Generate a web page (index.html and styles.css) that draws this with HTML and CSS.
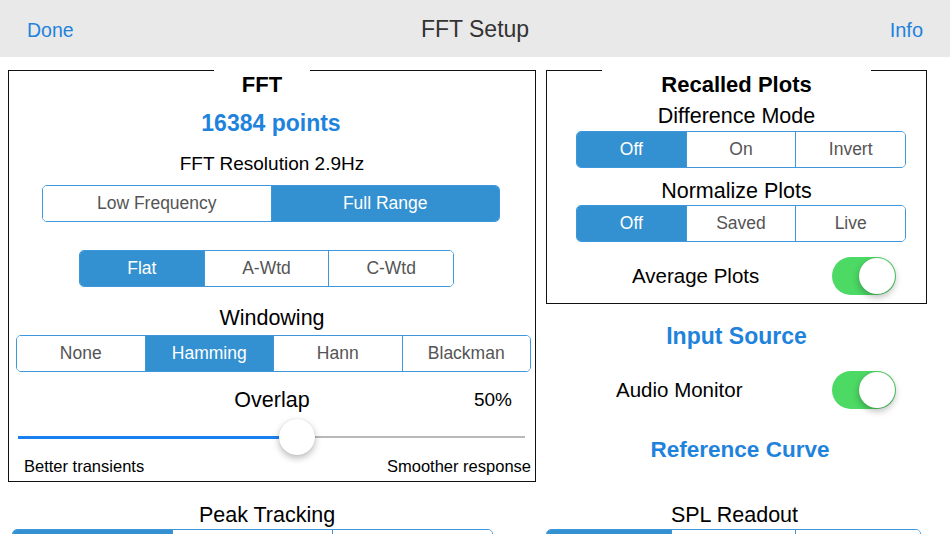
FILE: index.html
```html
<!DOCTYPE html>
<html>
<head>
<meta charset="utf-8">
<title>FFT Setup</title>
<link rel="stylesheet" href="styles.css">
</head>
<body>
<header class="navbar">
  <span class="nav-btn">Done</span>
  <span class="nav-title">FFT Setup</span>
  <span class="nav-btn nav-right">Info</span>
</header>
<main class="main">
  <section class="col col-left">
    <div class="box box-fft">
      <div class="box-head head-fft"><span class="box-title title-fft">FFT</span></div>
      <div class="points">16384 points</div>
      <div class="label res">FFT Resolution 2.9Hz</div>
      <div class="seg seg-range"><span class="opt">Low Frequency</span><span class="opt on">Full Range</span></div>
      <div class="seg seg-wtd"><span class="opt on">Flat</span><span class="opt">A-Wtd</span><span class="opt">C-Wtd</span></div>
      <div class="label heading win">Windowing</div>
      <div class="seg seg-win"><span class="opt">None</span><span class="opt on">Hamming</span><span class="opt">Hann</span><span class="opt">Blackman</span></div>
      <div class="overlap-row"><span></span><span class="heading">Overlap</span><span class="pct">50%</span></div>
      <div class="slider"><span class="track-fill"></span><span class="thumb"></span><span class="track-rest"></span></div>
      <div class="slider-labels"><span>Better transients</span><span>Smoother response</span></div>
    </div>
    <div class="label heading peak">Peak Tracking</div>
    <div class="seg seg-peak"><span class="opt on"></span><span class="opt"></span><span class="opt"></span></div>
  </section>
  <section class="col col-right">
    <div class="box box-recall">
      <div class="box-head"><span class="box-title title-recall">Recalled Plots</span></div>
      <div class="label heading diff">Difference Mode</div>
      <div class="seg seg-diff"><span class="opt on">Off</span><span class="opt">On</span><span class="opt">Invert</span></div>
      <div class="label heading norm">Normalize Plots</div>
      <div class="seg seg-norm"><span class="opt on">Off</span><span class="opt">Saved</span><span class="opt">Live</span></div>
      <div class="toggle-row avg"><span class="toggle-label">Average Plots</span><span class="switch"><span class="knob"></span></span></div>
    </div>
    <div class="blue-head input">Input Source</div>
    <div class="toggle-row audio"><span class="toggle-label">Audio Monitor</span><span class="switch"><span class="knob"></span></span></div>
    <div class="blue-head ref">Reference Curve</div>
    <div class="label heading spl">SPL Readout</div>
    <div class="seg seg-spl"><span class="opt on"></span><span class="opt"></span><span class="opt"></span></div>
  </section>
</main>
</body>
</html>
```

FILE: styles.css
```css
* { box-sizing: border-box; }
html, body {
  margin: 0;
  padding: 0;
  background: #ffffff;
  width: 950px;
  height: 534px;
  overflow: hidden;
  font-family: "Liberation Sans", Arial, Helvetica, sans-serif;
  color: #111111;
}

.navbar {
  height: 57px;
  background: #e9e9e9;
  display: grid;
  grid-template-columns: 1fr auto 1fr;
  align-items: center;
  padding: 0 27px;
}
.nav-btn {
  color: #1f83dc;
  font-size: 19.5px;
  line-height: 57px;
  padding-top: 2px;
}
.nav-right { justify-self: end; font-size: 20px; }
.nav-title {
  color: #333333;
  font-size: 23px;
  line-height: 57px;
}

.main {
  display: flex;
  gap: 10px;
  padding: 13px 0 0 8px;
}
.col { display: flex; flex-direction: column; }
.col-left { width: 528px; }
.col-right { width: 381px; }

.box {
  border: 1px solid #111;
  border-top: none;
  display: flex;
  flex-direction: column;
}
.box-fft { height: 412px; }
.box-recall { height: 234px; }

.box-head {
  display: flex;
  height: 28px;
  margin: 0 -1px;
}
.box-head::before,
.box-head::after {
  content: "";
  flex: 1;
  border-top: 1px solid #111;
}
.head-fft::before { flex: 0 0 206px; }
.box-title {
  font-weight: bold;
  font-size: 22px;
  line-height: 29px;
  text-align: center;
  color: #000;
}
.title-fft { width: 96px; }
.title-recall { width: 269px; }

.points {
  margin-top: 10px;
  text-align: center;
  color: #1f83dc;
  font-weight: bold;
  font-size: 23px;
  line-height: 30px;
  padding-right: 2px;
}
.label {
  text-align: center;
  line-height: 26px;
  color: #000;
}
.res { margin-top: 13px; font-size: 19px; }
.heading { font-size: 21.5px; }

.seg {
  display: flex;
  height: 37px;
  border: 1px solid #3d97da;
  border-radius: 5px;
  overflow: hidden;
  flex-shrink: 0;
}
.opt {
  flex: 1;
  text-align: center;
  line-height: 35px;
  font-size: 17.5px;
  color: #555555;
  background: #ffffff;
}
.opt + .opt { border-left: 1px solid #3d97da; }
.opt.on { background: #3391d1; color: #ffffff; }

.seg-range { margin: 8px 0 0 33px; width: 458px; }
.seg-wtd { margin: 28px 0 0 70px; width: 375px; }
.win { margin-top: 18px; }
.seg-win { margin: 4px 0 0 7px; width: 515px; }

.overlap-row {
  margin-top: 15px;
  display: grid;
  grid-template-columns: 1fr auto 1fr;
  line-height: 26px;
  color: #000;
}
.pct {
  justify-self: end;
  font-size: 19px;
  padding-right: 23px;
}

.slider {
  margin: 5px 10px 0 9px;
  height: 38px;
  display: flex;
  align-items: center;
}
.track-fill {
  width: 262px;
  height: 3px;
  background: #1c7ff0;
}
.track-rest {
  flex: 1;
  height: 2px;
  background: #b8b8b8;
}
.thumb {
  width: 36px;
  height: 36px;
  border-radius: 50%;
  background: #ffffff;
  box-shadow: 0 3px 7px rgba(0, 0, 0, 0.28), 0 0 1px rgba(0, 0, 0, 0.15);
  margin: 0 -1px;
  position: relative;
  z-index: 1;
}
.slider-labels {
  display: flex;
  justify-content: space-between;
  padding: 0 4px 0 15px;
  font-size: 16.5px;
  line-height: 20px;
  color: #000;
}

.peak { margin-top: 20px; padding-right: 10px; }
.seg-peak { margin: 1px 0 0 4px; width: 481px; }

.diff { margin-top: 5px; }
.seg-diff { margin: 2px 0 0 29px; width: 330px; }
.norm { margin-top: 10px; }
.seg-norm { margin: 1px 0 0 29px; width: 330px; }

.toggle-row {
  display: flex;
  align-items: center;
  height: 38px;
}
.toggle-label {
  font-size: 20.5px;
  color: #000;
}
.avg { margin-top: 15px; padding-left: 85px; }
.avg .switch { margin-right: 30px; }
.audio { margin-top: 20px; padding-left: 70px; }
.audio .switch { margin-right: 31px; }

.switch {
  margin-left: auto;
  width: 64px;
  height: 38px;
  border-radius: 19px;
  background: #4cd964;
  display: flex;
  justify-content: flex-end;
  align-items: center;
  padding: 1px;
}
.knob {
  width: 36px;
  height: 36px;
  border-radius: 50%;
  background: #ffffff;
  box-shadow: 0 3px 7px rgba(0, 0, 0, 0.28), 0 0 1px rgba(0, 0, 0, 0.2);
}

.blue-head {
  text-align: center;
  color: #1f83dc;
  font-weight: bold;
  font-size: 23px;
  line-height: 30px;
}
.input { margin-top: 17px; }
.ref { margin-top: 26px; font-size: 22.5px; padding-left: 7px; }
.spl { margin-top: 37px; padding-right: 4px; }
.seg-spl { margin-top: 1px; width: 375px; }
```
